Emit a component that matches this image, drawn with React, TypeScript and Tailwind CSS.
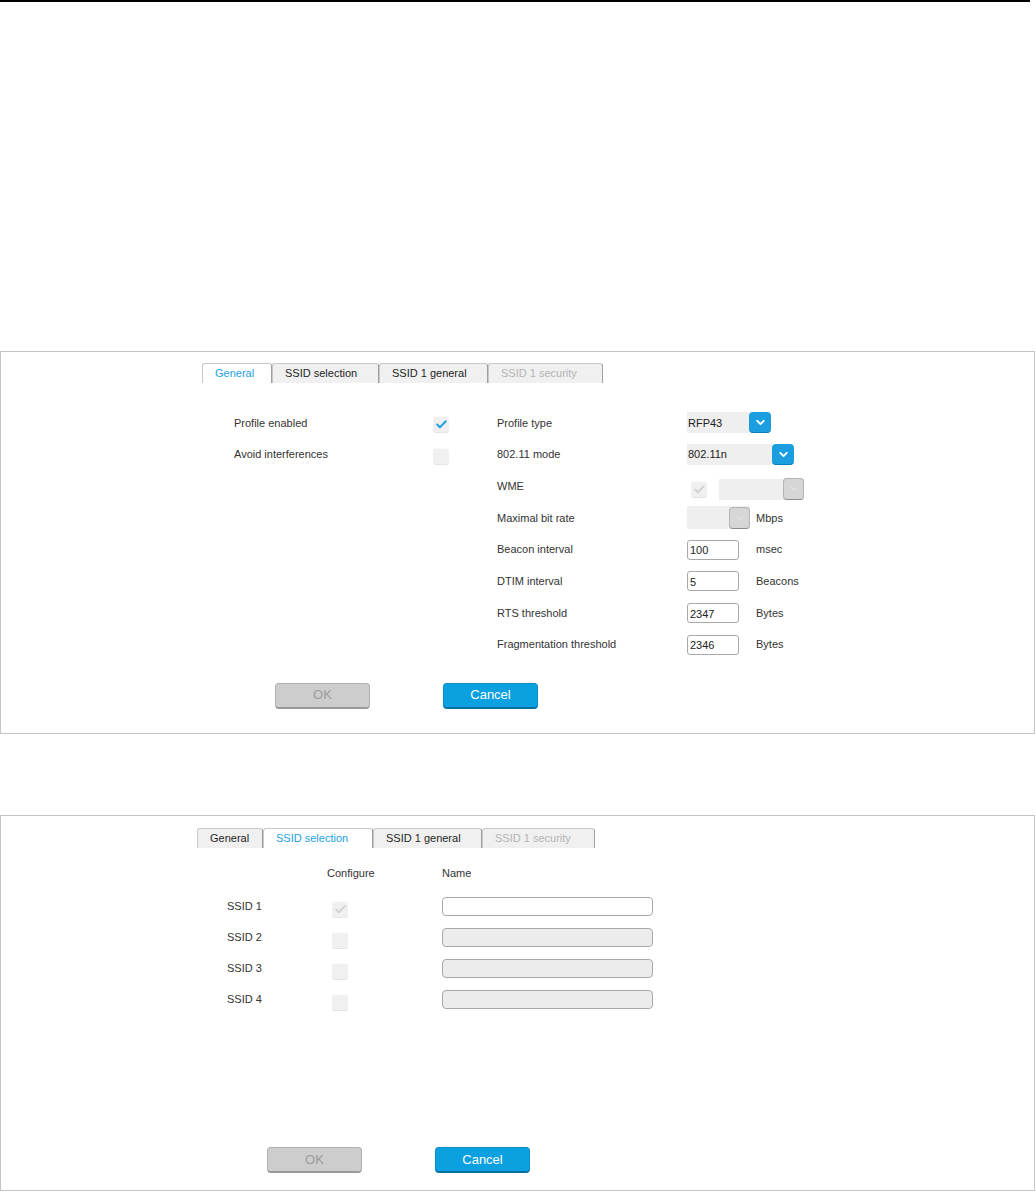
import React from 'react'
import { Check, ChevronDown } from 'lucide-react'

type TabState = 'active' | 'normal' | 'disabled'

function Tab({ label, width, state }: { label: string; width: string; state: TabState }) {
  const tone =
    state === 'active'
      ? 'bg-white text-[#1ba1e2]'
      : state === 'disabled'
        ? 'bg-[#f0f0f0] text-[#b4b4b4]'
        : 'bg-[#f0f0f0] text-[#1f1f1f]'
  return (
    <div
      className={`${width} ${tone} flex h-5 items-center rounded-t-[3px] border border-b-0 border-[#c8c8c8] border-r-[#9e9e9e] pl-3 text-[11px]`}
    >
      {label}
    </div>
  )
}

function CheckBox({ checked = false, faded = false }: { checked?: boolean; faded?: boolean }) {
  return (
    <span className="flex h-4 w-4 items-center justify-center rounded-[3px] bg-[#f0f0f0] shadow-[inset_0_1px_0_#fafafa,0_1px_0_#e4e4e4]">
      {checked && (
        <Check size={13} strokeWidth={3.5} className={faded ? 'text-[#d2d2d2]' : 'text-[#1a9fe0]'} />
      )}
    </span>
  )
}

function BlueArrow() {
  return (
    <span className="flex h-[21px] w-[22px] items-center justify-center rounded-[4px] border-b border-[#0b7fb8] bg-[#1a9ee0]">
      <ChevronDown size={13} strokeWidth={3.5} className="text-white" />
    </span>
  )
}

function GreyArrow() {
  return (
    <span className="flex h-[22px] w-[21px] items-center justify-center rounded-[4px] border border-[#b4b4b4] border-b-[#8c8c8c] bg-[#d6d6d6]">
      <ChevronDown size={12} strokeWidth={2} className="text-[#ededed]" />
    </span>
  )
}

function Field({ value }: { value: string }) {
  return (
    <div className="flex h-5 w-[52px] items-center rounded-[3px] border border-[#a8a8a8] bg-white pl-[2px] pt-[2px] text-[11px] text-[#222]">
      {value}
    </div>
  )
}

function Unit({ children }: { children: React.ReactNode }) {
  return <span className="ml-[17px] text-[11px] text-[#333]">{children}</span>
}

function Buttons() {
  return (
    <div className="flex gap-[73px]">
      <div className="flex h-[26px] w-[95px] items-center justify-center rounded-[4px] border border-[#b0b0b0] border-b-2 border-b-[#999] bg-[#cdcdcd] text-[13px] text-[#9c9c9c]">
        OK
      </div>
      <div className="flex h-[26px] w-[95px] items-center justify-center rounded-[4px] border border-[#0a8cc6] border-b-2 border-b-[#07709f] bg-[#0ba0e0] text-[13px] text-white">
        Cancel
      </div>
    </div>
  )
}

const generalRows: { left?: string; box?: boolean; boxChecked?: boolean; label: string; control: React.ReactNode }[] = [
  {
    left: 'Profile enabled',
    box: true,
    boxChecked: true,
    label: 'Profile type',
    control: (
      <div className="flex items-center">
        <div className="flex h-[21px] w-[62px] items-center bg-[#efefef] pl-[1px] text-[11px] text-[#222]">RFP43</div>
        <BlueArrow />
      </div>
    ),
  },
  {
    left: 'Avoid interferences',
    box: true,
    label: '802.11 mode',
    control: (
      <div className="flex items-center">
        <div className="flex h-[21px] w-[85px] items-center bg-[#efefef] pl-[1px] text-[11px] text-[#222]">802.11n</div>
        <BlueArrow />
      </div>
    ),
  },
  {
    label: 'WME',
    control: (
      <div className="mt-[6px] flex items-center">
        <span className="ml-[4px]">
          <CheckBox checked faded />
        </span>
        <div className="ml-[12px] flex h-[21px] w-[85px] items-center justify-end bg-[#efefef]">
          <GreyArrow />
        </div>
      </div>
    ),
  },
  {
    label: 'Maximal bit rate',
    control: (
      <div className="flex items-center">
        <div className="flex h-[23px] w-[63px] items-center justify-end bg-[#efefef]">
          <GreyArrow />
        </div>
        <span className="ml-[6px] text-[11px] text-[#333]">Mbps</span>
      </div>
    ),
  },
  { label: 'Beacon interval', control: <div className="flex items-center"><Field value="100" /><Unit>msec</Unit></div> },
  { label: 'DTIM interval', control: <div className="flex items-center"><Field value="5" /><Unit>Beacons</Unit></div> },
  { label: 'RTS threshold', control: <div className="flex items-center"><Field value="2347" /><Unit>Bytes</Unit></div> },
  { label: 'Fragmentation threshold', control: <div className="flex items-center"><Field value="2346" /><Unit>Bytes</Unit></div> },
]

const ssids = [
  { name: 'SSID 1', checked: true, enabled: true },
  { name: 'SSID 2', checked: false, enabled: false },
  { name: 'SSID 3', checked: false, enabled: false },
  { name: 'SSID 4', checked: false, enabled: false },
]

export default function App() {
  return (
    <div className="min-h-screen bg-white font-['Liberation_Sans',Arial,sans-serif] text-[#333]">
      <div className="h-[2px] w-[1030px] bg-black" />

      {/* General tab */}
      <section className="mt-[349px] h-[383px] w-[1035px] border border-[#c4c4c4] pt-[11px]">
        <div className="flex pl-[201px]">
          <Tab label="General" width="w-[70px]" state="active" />
          <Tab label="SSID selection" width="w-[107px]" state="normal" />
          <Tab label="SSID 1 general" width="w-[109px]" state="normal" />
          <Tab label="SSID 1 security" width="w-[115px]" state="disabled" />
        </div>

        <div className="mt-[24px] grid auto-rows-[31.7px] grid-cols-[199px_64px_190px_1fr] pl-[233px] text-[11px]">
          {generalRows.map((r) => (
            <React.Fragment key={r.label}>
              <div className="flex items-center">{r.left}</div>
              <div className="flex items-center">{r.box && <span className="mt-[3px]"><CheckBox checked={r.boxChecked} /></span>}</div>
              <div className="flex items-center">{r.label}</div>
              <div className="flex items-center">{r.control}</div>
            </React.Fragment>
          ))}
        </div>

        <div className="mt-[22px] pl-[274px]">
          <Buttons />
        </div>
      </section>

      {/* SSID selection tab */}
      <section className="mt-[81px] h-[376px] w-[1035px] border border-[#c4c4c4] pt-[12px]">
        <div className="flex pl-[196px]">
          <Tab label="General" width="w-[66px]" state="normal" />
          <Tab label="SSID selection" width="w-[110px]" state="active" />
          <Tab label="SSID 1 general" width="w-[109px]" state="normal" />
          <Tab label="SSID 1 security" width="w-[113px]" state="disabled" />
        </div>

        <div className="mt-[15px] flex h-5 items-center pl-[326px] text-[11px]">
          <span className="w-[115px]">Configure</span>
          <span>Name</span>
        </div>

        <div className="mt-[8px] grid auto-rows-[31px] grid-cols-[105px_110px_1fr] pl-[226px] text-[11px]">
          {ssids.map((s) => (
            <React.Fragment key={s.name}>
              <div className="flex items-center">{s.name}</div>
              <div className="flex items-center">
                <span className="mt-[5px]">
                  <CheckBox checked={s.checked} faded />
                </span>
              </div>
              <div className="flex items-center">
                <div
                  className={`h-[19px] w-[211px] rounded-[4px] border border-[#a8a8a8] ${s.enabled ? 'bg-white' : 'bg-[#ececec]'}`}
                />
              </div>
            </React.Fragment>
          ))}
        </div>

        <div className="mt-[132px] pl-[266px]">
          <Buttons />
        </div>
      </section>
    </div>
  )
}
